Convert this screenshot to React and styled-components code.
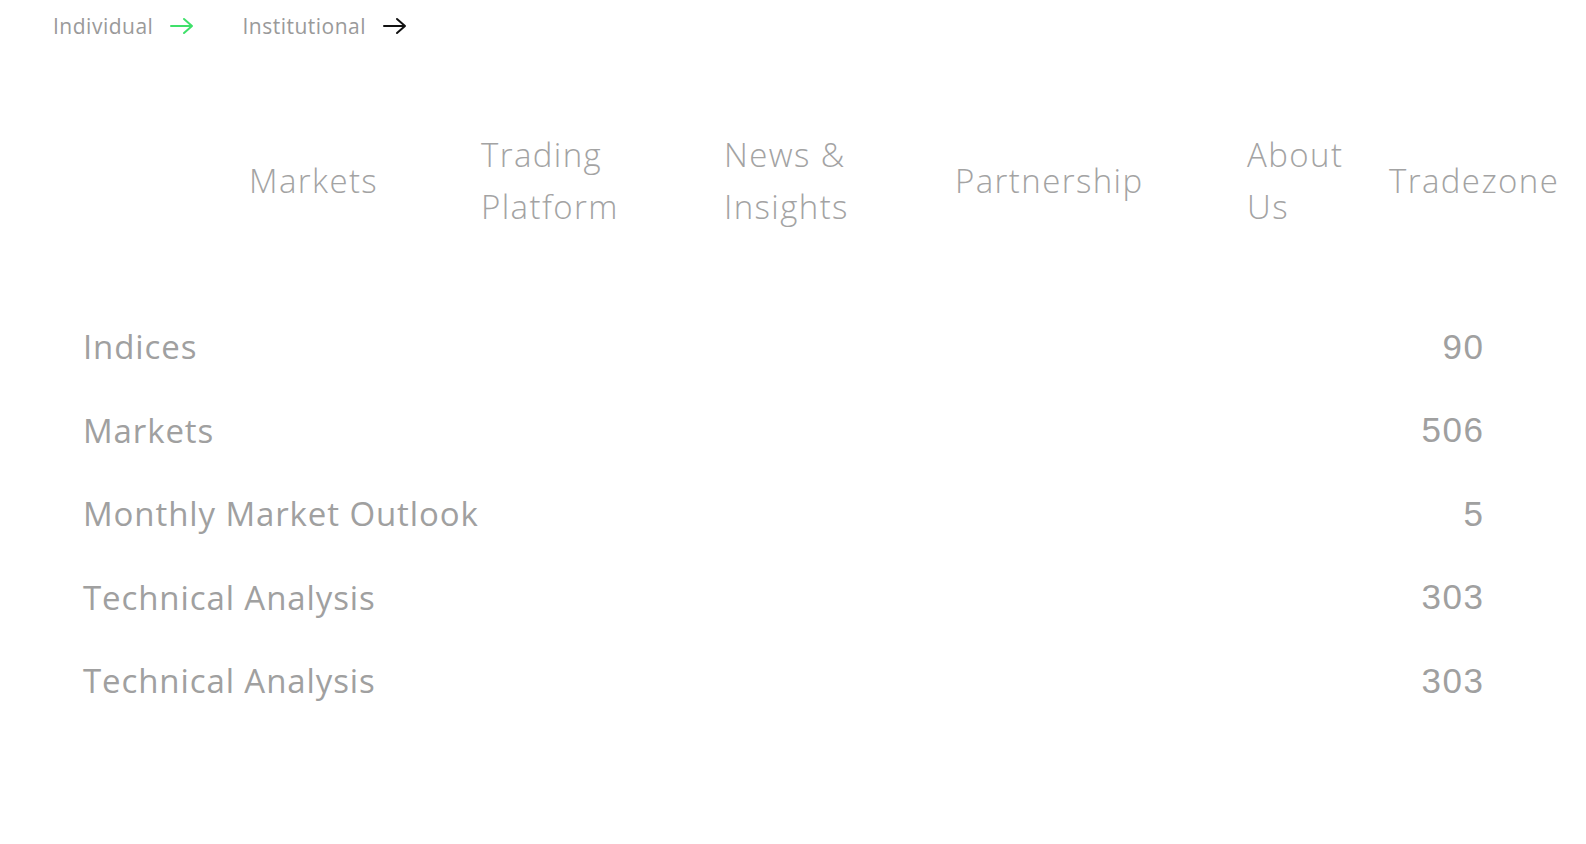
import React from "react";
import styled, { createGlobalStyle } from "styled-components";

const Global = createGlobalStyle`
  html, body { margin: 0; padding: 0; background: #ffffff; }
  body { font-family: "Open Sans", "Noto Sans", sans-serif; }
`;

const Page = styled.div`
  width: 1586px;
  height: 844px;
  background: #fff;
  overflow: hidden;
`;

const TopBar = styled.div`
  display: flex;
  align-items: center;
  height: 52px;
  padding-left: 53px;
  gap: 48px;
`;

const TopLink = styled.a`
  display: flex;
  align-items: center;
  gap: 17px;
  font-family: "Open Sans", sans-serif;
  font-weight: 500;
  font-size: 21px;
  letter-spacing: 0.5px;
  color: #9a9a9a;
  text-decoration: none;
`;

const Arrow = ({ color }) => (
  <svg width="24" height="18" viewBox="0 0 24 18" fill="none">
    <path
      d="M1 9h21M14 2l8 7-8 7"
      stroke={color}
      strokeWidth="2"
      strokeLinecap="round"
      strokeLinejoin="round"
    />
  </svg>
);

const Nav = styled.nav`
  box-sizing: border-box;
  display: flex;
  align-items: center;
  height: 253px;
  padding: 4px 0 0 249px;
`;

const NavItem = styled.div`
  flex: 0 0 ${(p) => (p.$w ? `${p.$w}px` : "auto")};
  font-family: "Open Sans", sans-serif;
  font-weight: 300;
  font-size: 33px;
  letter-spacing: 1.4px;
  line-height: 52px;
  color: #a3a3a3;
  white-space: nowrap;
`;

const NavLine = styled.span`
  display: block;
`;

const List = styled.div`
  display: flex;
  flex-direction: column;
  padding: 0 103px 0 83px;
`;

const Row = styled.div`
  display: flex;
  align-items: center;
  justify-content: space-between;
  height: 83.5px;
`;

const Label = styled.span`
  font-family: "Open Sans", sans-serif;
  font-weight: 400;
  font-size: 33px;
  letter-spacing: 0.9px;
  color: #a0a0a0;
`;

const Count = styled.span`
  font-family: "Liberation Sans", Arial, sans-serif;
  font-size: 35px;
  letter-spacing: 1.5px;
  margin-right: -1.5px;
  color: #a0a0a0;
`;

const navItems = [
  { lines: ["Markets"], w: 232 },
  { lines: ["Trading", "Platform"], w: 243 },
  { lines: ["News &", "Insights"], w: 231 },
  { lines: ["Partnership"], w: 292 },
  { lines: ["About", "Us"], w: 142 },
  { lines: ["Tradezone"] },
];

const rows = [
  ["Indices", 90],
  ["Markets", 506],
  ["Monthly Market Outlook", 5],
  ["Technical Analysis", 303],
  ["Technical Analysis", 303],
];

export default function App() {
  return (
    <Page>
      <Global />
      <TopBar>
        <TopLink href="#">
          Individual <Arrow color="#3fe06a" />
        </TopLink>
        <TopLink href="#">
          Institutional <Arrow color="#111111" />
        </TopLink>
      </TopBar>
      <Nav>
        {navItems.map((it, i) => (
          <NavItem key={i} $w={it.w}>
            {it.lines.map((l) => (
              <NavLine key={l}>{l}</NavLine>
            ))}
          </NavItem>
        ))}
      </Nav>
      <List>
        {rows.map(([label, n], i) => (
          <Row key={i}>
            <Label>{label}</Label>
            <Count>{n}</Count>
          </Row>
        ))}
      </List>
    </Page>
  );
}
